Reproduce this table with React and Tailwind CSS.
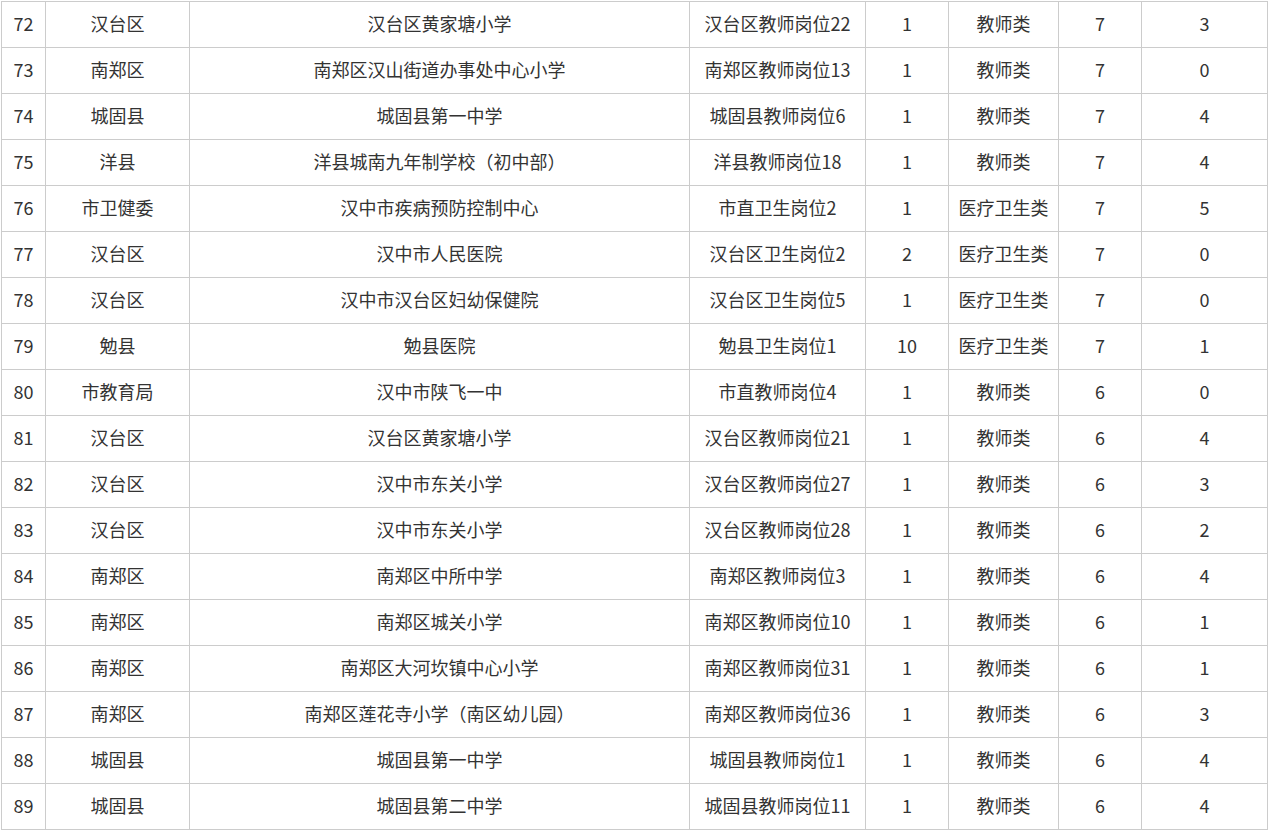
const rows = [
  [72, '汉台区', '汉台区黄家塘小学', '汉台区教师岗位22', 1, '教师类', 7, 3],
  [73, '南郑区', '南郑区汉山街道办事处中心小学', '南郑区教师岗位13', 1, '教师类', 7, 0],
  [74, '城固县', '城固县第一中学', '城固县教师岗位6', 1, '教师类', 7, 4],
  [75, '洋县', '洋县城南九年制学校（初中部）', '洋县教师岗位18', 1, '教师类', 7, 4],
  [76, '市卫健委', '汉中市疾病预防控制中心', '市直卫生岗位2', 1, '医疗卫生类', 7, 5],
  [77, '汉台区', '汉中市人民医院', '汉台区卫生岗位2', 2, '医疗卫生类', 7, 0],
  [78, '汉台区', '汉中市汉台区妇幼保健院', '汉台区卫生岗位5', 1, '医疗卫生类', 7, 0],
  [79, '勉县', '勉县医院', '勉县卫生岗位1', 10, '医疗卫生类', 7, 1],
  [80, '市教育局', '汉中市陕飞一中', '市直教师岗位4', 1, '教师类', 6, 0],
  [81, '汉台区', '汉台区黄家塘小学', '汉台区教师岗位21', 1, '教师类', 6, 4],
  [82, '汉台区', '汉中市东关小学', '汉台区教师岗位27', 1, '教师类', 6, 3],
  [83, '汉台区', '汉中市东关小学', '汉台区教师岗位28', 1, '教师类', 6, 2],
  [84, '南郑区', '南郑区中所中学', '南郑区教师岗位3', 1, '教师类', 6, 4],
  [85, '南郑区', '南郑区城关小学', '南郑区教师岗位10', 1, '教师类', 6, 1],
  [86, '南郑区', '南郑区大河坎镇中心小学', '南郑区教师岗位31', 1, '教师类', 6, 1],
  [87, '南郑区', '南郑区莲花寺小学（南区幼儿园）', '南郑区教师岗位36', 1, '教师类', 6, 3],
  [88, '城固县', '城固县第一中学', '城固县教师岗位1', 1, '教师类', 6, 4],
  [89, '城固县', '城固县第二中学', '城固县教师岗位11', 1, '教师类', 6, 4],
]

export default function App() {
  return (
    <div className="w-full min-h-screen bg-white pt-px pl-px">
      <div
        className="grid grid-cols-[44px_144px_500px_176px_83px_110px_83px_126px] w-[1267px] border-l border-t border-[#cccccc] text-[18px] text-[#333333]"
        style={{ fontFamily: '"Noto Sans CJK SC", "Noto Sans", sans-serif' }}
      >
        {rows.map((r) =>
          r.map((c, i) => (
            <div
              key={r[0] + '-' + i}
              className="h-[46px] pb-1 flex items-center justify-center border-r border-b border-[#cccccc] leading-none whitespace-nowrap"
            >
              {c}
            </div>
          ))
        )}
      </div>
    </div>
  )
}
